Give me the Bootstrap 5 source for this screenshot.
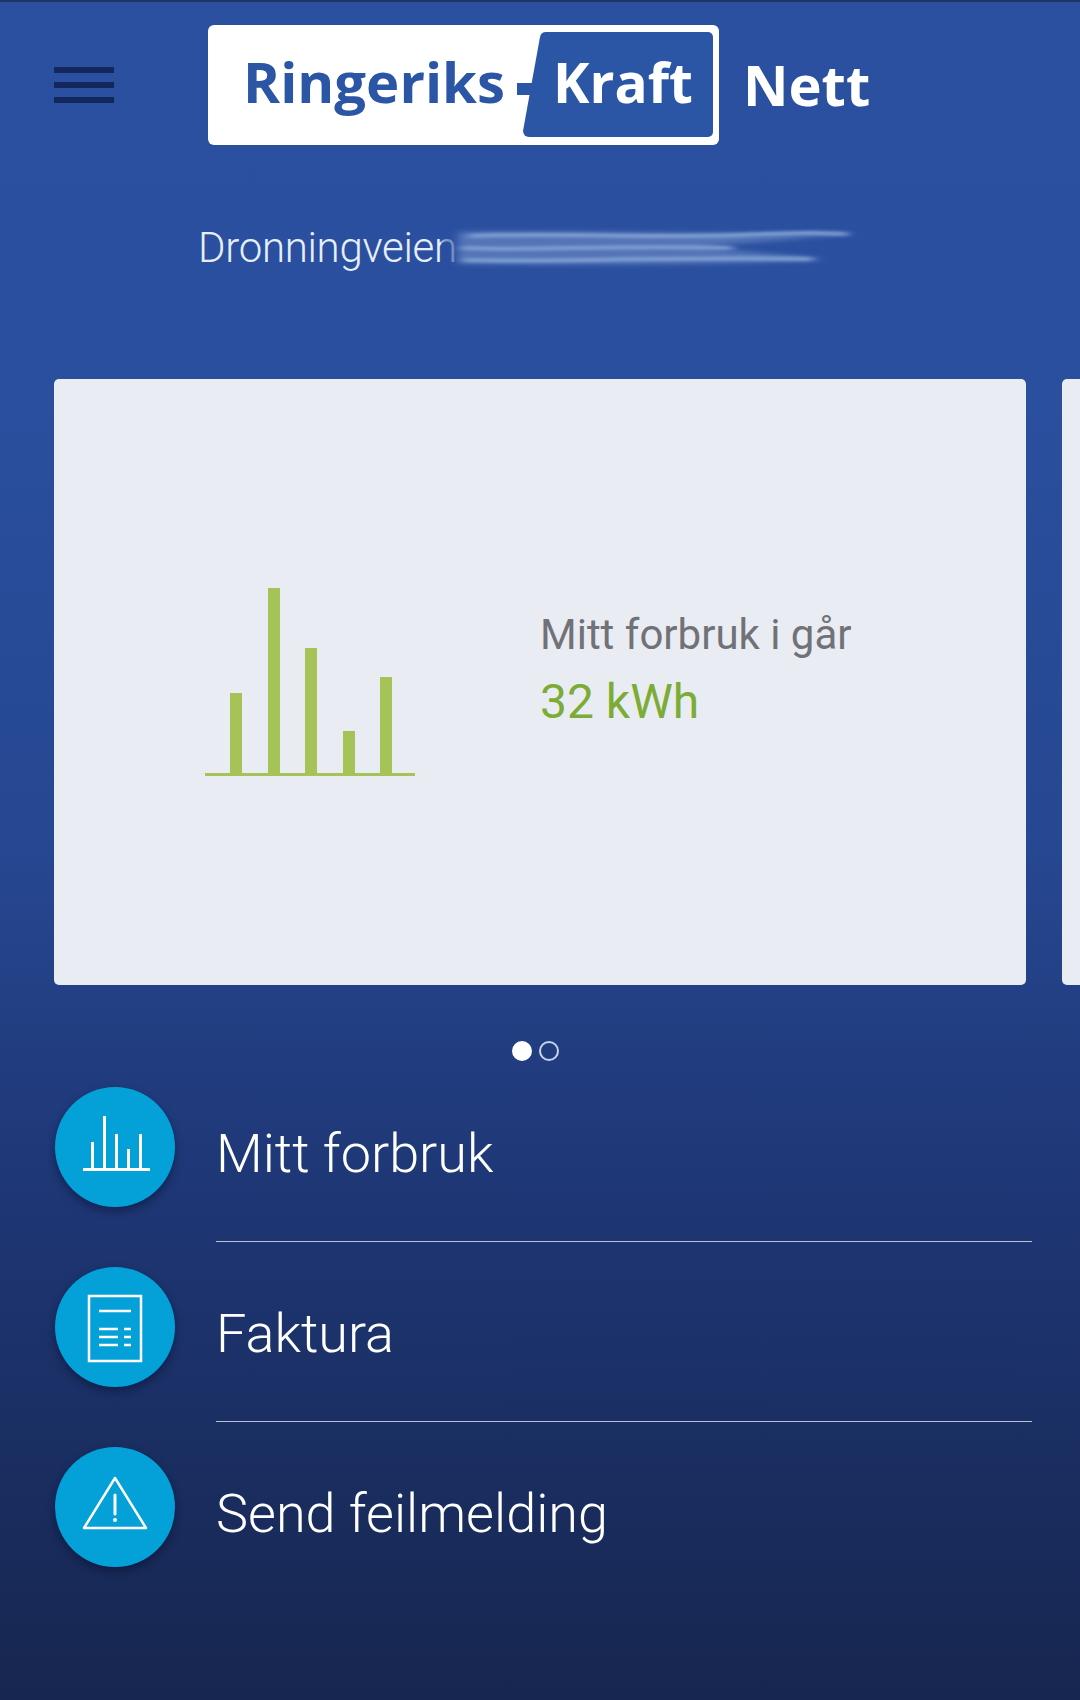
<!DOCTYPE html>
<html lang="no">

<head>
    <meta charset="UTF-8">
    <meta name="viewport" content="width=device-width, initial-scale=1.0">
    <title>Ringeriks-Kraft Nett</title>
    <link href="https://cdn.jsdelivr.net/npm/bootstrap@5.3.3/dist/css/bootstrap.min.css" rel="stylesheet">
    <style>
        body {
            background: #16264f;
            font-family: Roboto, "Liberation Sans", sans-serif;
        }

        .app-screen {
            width: 1080px;
            height: 1700px;
            overflow: hidden;
            border-top: 2px solid #1f3568;
            background: linear-gradient(#2b50a0 0, #2a4f9e 400px, #264791 850px, #1e3674 1200px, #16264f 1700px);
            color: #fff;
        }

        .top-row {
            padding: 23px 0 0 54px;
        }

        .burger {
            width: 60px;
            margin-right: 94px;
            gap: 9px;
        }

        .burger span {
            display: block;
            height: 6px;
            background: #13275c;
        }

        .logo-word {
            font-family: "Open Sans", "Liberation Sans", sans-serif;
            font-weight: 700;
            font-size: 56px;
        }

        .logo-mark {
            filter: blur(.4px);
        }

        .logo-nett {
            margin-left: 24px;
            color: #fff;
            line-height: 1;
            padding-bottom: 2px;
            filter: blur(.4px);
        }

        .address-row {
            margin-top: 78px;
            padding-left: 198px;
            height: 50px;
        }

        .address-text {
            font-size: 42px;
            font-weight: 300;
            line-height: 50px;
            letter-spacing: -.3px;
            color: #e6eefa;
        }

        .smudge {
            margin-left: -16px;
        }

        .card-strip {
            margin-top: 106px;
            padding-left: 54px;
            gap: 36px;
        }

        .info-card {
            flex: 0 0 972px;
            height: 606px;
            background: #e9ecf3;
            border: 0;
            border-radius: 5px;
            padding-left: 151px;
        }

        .info-text {
            margin-left: 125px;
            padding-bottom: 28px;
        }

        .info-label {
            font-size: 42px;
            line-height: 60px;
            color: #717278;
        }

        .info-value {
            font-size: 48px;
            line-height: 60px;
            margin-top: 7px;
            color: #7cac35;
        }

        .pager {
            margin-top: 56px;
            padding-left: 512px;
            gap: 7px;
        }

        .pager-dot {
            width: 20px;
            height: 20px;
            border: 2.5px solid #c5d5ec;
            border-radius: 50%;
        }

        .pager-dot.active-dot {
            background: #fff;
            border-color: #fff;
        }

        .menu-list {
            margin-top: 26px;
            padding-left: 55px;
        }

        .menu-row {
            height: 155px;
            margin-bottom: 25px;
        }

        .menu-round {
            flex: 0 0 120px;
            height: 120px;
            border-radius: 50%;
            background: #04a0d8;
            box-shadow: 0 4px 9px rgba(5, 12, 40, .45);
        }

        .menu-body {
            width: 816px;
            margin-left: 41px;
            padding-top: 7px;
            font-size: 54px;
            font-weight: 300;
            line-height: 120px;
            border-bottom: 1px solid rgba(255, 255, 255, .7);
        }

        .menu-row:last-child .menu-body {
            border-bottom: 0;
        }
    </style>
</head>

<body class="m-0">
    <div class="app-screen">
        <header class="top-row d-flex align-items-center">
            <div class="burger d-flex flex-column">
                <span></span>
                <span></span>
                <span></span>
            </div>
            <svg class="logo-mark" width="511" height="120" viewBox="0 0 511 120">
                <rect width="511" height="120" rx="6" fill="#fff" />
                <path d="M332 12Q333 7 338 7H500a5 5 0 0 1 5 5V107a5 5 0 0 1-5 5H321a6 6 0 0 1-6-6z" fill="#2b55a5" />
                <rect x="309" y="58" width="22" height="12" fill="#2b55a5" />
                <text class="logo-word" x="35" y="78" fill="#2b55a5" textLength="262" lengthAdjust="spacingAndGlyphs">Ringeriks</text>
                <text class="logo-word" x="345" y="78" fill="#fff" textLength="140" lengthAdjust="spacingAndGlyphs">Kraft</text>
            </svg>
            <span class="logo-word logo-nett">Nett</span>
        </header>

        <div class="address-row d-flex align-items-center">
            <span class="address-text">Dronningveien</span>
            <svg class="smudge" width="430" height="50" viewBox="0 0 430 50">
                <defs>
                    <filter id="smear" x="-5%" y="-50%" width="110%" height="200%">
                        <feGaussianBlur stdDeviation="4 2.5" />
                    </filter>
                    <filter id="smear-thin" x="-5%" y="-100%" width="110%" height="300%">
                        <feGaussianBlur stdDeviation="5 1.5" />
                    </filter>
                </defs>
                <rect x="0" y="6" width="20" height="40" fill="#2b50a0" opacity=".6" filter="url(#smear)" />
                <path d="M17 9C120 7 300 12 415 10C350 17 300 20 260 24C300 28 350 32 385 37C280 42 120 42 17 41Z" fill="#5274b7" filter="url(#smear)" />
                <g filter="url(#smear-thin)" fill="none" stroke="#7f9ed3" stroke-width="4" stroke-linecap="round">
                    <path d="M30 13C110 10 210 15 300 12S370 10 405 11" />
                    <path d="M22 25C90 28 170 22 290 25" />
                    <path d="M24 37C110 39 220 34 370 36" />
                </g>
            </svg>
        </div>

        <div class="card-strip d-flex">
            <div class="card info-card flex-row align-items-center">
                <svg width="210" height="188" viewBox="0 0 210 188" fill="#a5c357">
                    <rect x="25" y="105" width="12" height="80" />
                    <rect x="63" y="0" width="12" height="185" />
                    <rect x="100" y="60" width="12" height="125" />
                    <rect x="138" y="143" width="12" height="42" />
                    <rect x="175" y="89" width="12" height="96" />
                    <rect x="0" y="185" width="210" height="3" />
                </svg>
                <div class="info-text">
                    <div class="info-label">Mitt forbruk i går</div>
                    <div class="info-value">32 kWh</div>
                </div>
            </div>
            <div class="card info-card"></div>
        </div>

        <div class="pager d-flex">
            <div class="pager-dot active-dot"></div>
            <div class="pager-dot"></div>
        </div>

        <div class="menu-list">
            <div class="menu-row d-flex">
                <div class="menu-round d-flex align-items-center justify-content-center">
                    <svg width="120" height="120" viewBox="0 0 120 120" fill="#fff">
                        <rect x="36" y="55" width="3" height="27" />
                        <rect x="48" y="29" width="3" height="53" />
                        <rect x="60" y="47" width="3" height="35" />
                        <rect x="72" y="62" width="3" height="20" />
                        <rect x="84" y="47" width="3" height="35" />
                        <rect x="28" y="81" width="67" height="3" />
                    </svg>
                </div>
                <div class="menu-body">Mitt forbruk</div>
            </div>
            <div class="menu-row d-flex">
                <div class="menu-round d-flex align-items-center justify-content-center">
                    <svg width="120" height="120" viewBox="0 0 120 120" fill="none" stroke="#fff" stroke-width="2.5">
                        <rect x="34" y="29" width="52" height="65" />
                        <path d="M44 44H76M44 62H63M69 62H76M44 70H63M69 70H76M44 78H63M69 78H76" />
                    </svg>
                </div>
                <div class="menu-body">Faktura</div>
            </div>
            <div class="menu-row d-flex">
                <div class="menu-round d-flex align-items-center justify-content-center">
                    <svg width="120" height="120" viewBox="0 0 120 120" fill="none" stroke="#fff" stroke-width="2.5">
                        <path d="M60 31L29 81H91Z" stroke-linejoin="round" />
                        <path d="M60 48V67" stroke-width="3" stroke-linecap="round" />
                        <circle cx="60" cy="73" r="2" fill="#fff" stroke="none" />
                    </svg>
                </div>
                <div class="menu-body">Send feilmelding</div>
            </div>
        </div>
    </div>

    <script src="https://cdn.jsdelivr.net/npm/bootstrap@5.3.3/dist/js/bootstrap.bundle.min.js"></script>
</body>

</html>
